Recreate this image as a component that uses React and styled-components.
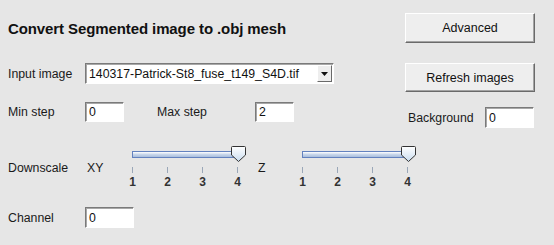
import styled, { createGlobalStyle } from "styled-components";

const GlobalStyle = createGlobalStyle`
  html, body {
    margin: 0;
    padding: 0;
    background: #e6e6e6;
  }
  body {
    font-family: "Liberation Sans", Arial, sans-serif;
    font-size: 12px;
    color: #1a1a1a;
  }
`;

const Page = styled.div`
  box-sizing: border-box;
  width: 554px;
  height: 245px;
  padding: 13px 19px 0 8px;
  display: flex;
  flex-direction: column;
  background: #e6e6e6;
`;

const Row = styled.div`
  display: flex;
  align-items: ${({ align }) => align || "flex-start"};
  height: ${({ h }) => h}px;
  margin-top: ${({ mt }) => mt || 0}px;
`;

const Title = styled.h1`
  margin: 0;
  font-size: 15px;
  font-weight: 700;
  letter-spacing: -0.1px;
  color: #111;
  line-height: 30px;
  padding-top: 2px;
`;

const Label = styled.span`
  display: inline-flex;
  align-items: center;
  width: ${({ w }) => w}px;
  height: ${({ h }) => h || 20}px;
  margin-left: ${({ ml }) => ml || 0}px;
  flex-shrink: 0;
  font-size: 12.3px;
  color: #1a1a1a;
  white-space: nowrap;
`;

const Button = styled.button`
  box-sizing: border-box;
  width: 130px;
  height: ${({ h }) => h}px;
  margin-left: auto;
  padding: 0;
  background: #eeeeee;
  border: 1px solid;
  border-color: #ffffff #6a6a6a #6a6a6a #ffffff;
  box-shadow: inset -1px -1px 0 #a3a3a3;
  font-family: "Liberation Sans", Arial, sans-serif;
  font-size: 12.5px;
  color: #111;
  cursor: pointer;
`;

const Field = styled.div`
  box-sizing: border-box;
  width: ${({ w }) => w}px;
  height: ${({ h }) => h || 20}px;
  flex-shrink: 0;
  background: #fff;
  border: 1px solid;
  border-color: #7a7a7a #ffffff #ffffff #7a7a7a;
  box-shadow: inset 1px 1px 0 #a8a8a8;
  padding: 0 0 0 3px;
  display: flex;
  align-items: center;
  font-size: 12.3px;
  color: #111;
`;

const Combo = styled(Field)`
  padding-left: 3px;
  justify-content: space-between;
`;

const ArrowButton = styled.span`
  box-sizing: border-box;
  width: 15px;
  height: 17px;
  margin-right: 1px;
  background: #eeeeee;
  border: 1px solid;
  border-color: #ffffff #6a6a6a #6a6a6a #ffffff;
  display: flex;
  align-items: center;
  justify-content: center;
`;

const Group = styled.div`
  display: flex;
  align-items: center;
  margin-left: auto;
  margin-right: 1px;
  align-self: flex-end;
`;

const SliderBox = styled.div`
  position: relative;
  width: 106px;
  padding: 0 7px;
  height: 40px;
  flex-shrink: 0;
`;

const Track = styled.div`
  box-sizing: border-box;
  margin-top: 5px;
  height: 7px;
  border: 1px solid #6382bf;
  background: linear-gradient(#ffffff, #c7d6eb 50%, #a9bedc);
`;

const Thumb = styled.svg`
  position: absolute;
  top: 0;
  left: ${({ x }) => x}px;
`;

const Scale = styled.div`
  display: flex;
  justify-content: space-between;
  margin-top: 9px;
`;

const Tick = styled.div`
  width: 1px;
  display: flex;
  flex-direction: column;
  align-items: center;
`;

const TickMark = styled.span`
  width: 1px;
  height: 6px;
  background: #9aa7b8;
`;

const TickNum = styled.span`
  margin-top: 3px;
  font-size: 12px;
  font-weight: 700;
  line-height: 12px;
  color: #333;
`;

const Slider = ({ max = 4 }) => (
  <SliderBox>
    <Track />
    <Thumb x={106} width="15" height="16" viewBox="0 0 15 16">
      <defs>
        <linearGradient id="tg" x1="0" y1="0" x2="0" y2="1">
          <stop offset="0" stopColor="#ffffff" />
          <stop offset="1" stopColor="#c9dcef" />
        </linearGradient>
      </defs>
      <path
        d="M0.5 1.5 Q0.5 0.5 1.5 0.5 H13.5 Q14.5 0.5 14.5 1.5 V9 L7.5 15.5 L0.5 9 Z"
        fill="url(#tg)"
        stroke="#333"
      />
    </Thumb>
    <Scale>
      {Array.from({ length: max }, (_, i) => (
        <Tick key={i}>
          <TickMark />
          <TickNum>{i + 1}</TickNum>
        </Tick>
      ))}
    </Scale>
  </SliderBox>
);

const App = () => (
  <Page>
    <GlobalStyle />
    <Row h={30} align="center">
      <Title>Convert Segmented image to .obj mesh</Title>
      <Button h={30}>Advanced</Button>
    </Row>
    <Row h={29} mt={20}>
      <Label w={77} h={21}>Input image</Label>
      <Combo w={249} h={21}>
        <span>140317-Patrick-St8_fuse_t149_S4D.tif</span>
        <ArrowButton>
          <svg width="7" height="4" viewBox="0 0 7 4">
            <path d="M0 0 H7 L3.5 4 Z" fill="#111" />
          </svg>
        </ArrowButton>
      </Combo>
      <Button h={29}>Refresh images</Button>
    </Row>
    <Row h={26} mt={10}>
      <Label w={77}>Min step</Label>
      <Field w={39}>0</Field>
      <Label w={98} ml={33}>Max step</Label>
      <Field w={39}>2</Field>
      <Group>
        <Label w={77} h={21}>Background</Label>
        <Field w={49} h={21}>0</Field>
      </Group>
    </Row>
    <Row h={40} mt={18}>
      <Label w={79} h={44}>Downscale</Label>
      <Label w={38} h={44}>XY</Label>
      <Slider />
      <Label w={37} h={44} ml={13}>Z</Label>
      <Slider />
    </Row>
    <Row h={21} mt={21}>
      <Label w={77} h={21}>Channel</Label>
      <Field w={49} h={21}>0</Field>
    </Row>
  </Page>
);

export default App;
